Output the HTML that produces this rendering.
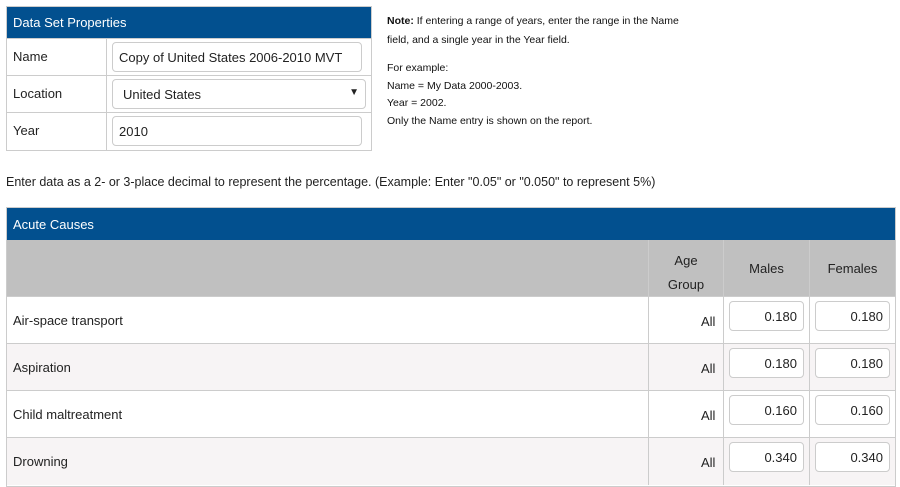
<!DOCTYPE html>
<html><head><style>
*{box-sizing:border-box;margin:0;padding:0}
body{width:900px;height:483px;overflow:hidden;background:#fff;font-family:"Liberation Sans",sans-serif;color:#222;position:relative}
.a{position:absolute}
.blue{background:#02508f;color:#fff;font-size:13px;}
.inp{position:absolute;background:#fff;border:1px solid #ccc;border-radius:4px;font-size:13px;color:#222}
.cell{position:absolute;border:1px solid #ccc}
.lbl{position:absolute;font-size:13px}
.note{position:absolute;left:387px;font-size:10.5px;color:#111;white-space:nowrap}
</style></head><body>
<div class="a" style="left:6px;top:6px;width:366px;height:145px;border:1px solid #ccc"></div>
<div class="a blue" style="left:7px;top:7px;width:364px;height:31px;padding:8px 6px">Data Set Properties</div>
<div class="cell" style="left:6px;top:38px;width:101px;height:38px"></div>
<div class="cell" style="left:106px;top:38px;width:266px;height:38px"></div>
<div class="cell" style="left:6px;top:75px;width:101px;height:38px"></div>
<div class="cell" style="left:106px;top:75px;width:266px;height:38px"></div>
<div class="cell" style="left:6px;top:112px;width:101px;height:39px"></div>
<div class="cell" style="left:106px;top:112px;width:266px;height:39px"></div>
<div class="lbl" style="left:13px;top:49px">Name</div>
<div class="lbl" style="left:13px;top:86px">Location</div>
<div class="lbl" style="left:13px;top:123px">Year</div>
<div class="inp" style="left:112px;top:42px;width:250px;height:30px;padding:7px 6px;white-space:nowrap;overflow:hidden">Copy of United States 2006-2010 MVT</div>
<div class="inp" style="left:112px;top:79px;width:254px;height:30px;padding:7px 10px">United States<span style="position:absolute;right:6px;top:7px;font-size:10px">▼</span></div>
<div class="inp" style="left:112px;top:116px;width:250px;height:30px;padding:7px 6px">2010</div>
<div class="note" style="top:15px"><b>Note:</b> If entering a range of years, enter the range in the Name</div>
<div class="note" style="top:34px">field, and a single year in the Year field.</div>
<div class="note" style="top:62px">For example:</div>
<div class="note" style="top:80px">Name = My Data 2000-2003.</div>
<div class="note" style="top:97px">Year = 2002.</div>
<div class="note" style="top:115px">Only the Name entry is shown on the report.</div>
<div class="a" style="left:6px;top:175px;font-size:12.5px;white-space:nowrap">Enter data as a 2- or 3-place decimal to represent the percentage. (Example: Enter "0.05" or "0.050" to represent 5%)</div>
<div class="a" style="left:6px;top:207px;width:890px;height:280px;border:1px solid #ccc"></div>
<div class="a blue" style="left:7px;top:208px;width:888px;height:32px;padding:9px 6px">Acute Causes</div>
<div class="a" style="left:7px;top:240px;width:888px;height:57px;background:#c0c0c0"></div>
<div class="a" style="left:7px;top:344px;width:888px;height:47px;background:#f7f4f5"></div>
<div class="a" style="left:7px;top:438px;width:888px;height:47px;background:#f7f4f5"></div>
<div class="a" style="left:6px;top:343px;width:890px;height:1px;background:#ccc"></div>
<div class="a" style="left:6px;top:390px;width:890px;height:1px;background:#ccc"></div>
<div class="a" style="left:6px;top:437px;width:890px;height:1px;background:#ccc"></div>
<div class="a" style="left:6px;top:296px;width:890px;height:1px;background:#ccc"></div>
<div class="a" style="left:648px;top:240px;width:1px;height:245px;background:#ccc"></div>
<div class="a" style="left:723px;top:240px;width:1px;height:245px;background:#ccc"></div>
<div class="a" style="left:809px;top:240px;width:1px;height:245px;background:#ccc"></div>
<div class="lbl" style="left:649px;top:249px;width:74px;text-align:center;line-height:24px">Age<br>Group</div>
<div class="lbl" style="left:724px;top:261px;width:85px;text-align:center">Males</div>
<div class="lbl" style="left:810px;top:261px;width:85px;text-align:center">Females</div>
<div class="lbl" style="left:13px;top:313px">Air-space transport</div>
<div class="lbl" style="left:13px;top:360px">Aspiration</div>
<div class="lbl" style="left:13px;top:407px">Child maltreatment</div>
<div class="lbl" style="left:13px;top:454px">Drowning</div>
<div class="lbl" style="left:701px;top:314px">All</div>
<div class="lbl" style="left:701px;top:361px">All</div>
<div class="lbl" style="left:701px;top:408px">All</div>
<div class="lbl" style="left:701px;top:455px">All</div>
<div class="inp" style="left:729px;top:301px;width:75px;height:30px;padding:7px 6px;text-align:right">0.180</div>
<div class="inp" style="left:815px;top:301px;width:75px;height:30px;padding:7px 6px;text-align:right">0.180</div>
<div class="inp" style="left:729px;top:348px;width:75px;height:30px;padding:7px 6px;text-align:right">0.180</div>
<div class="inp" style="left:815px;top:348px;width:75px;height:30px;padding:7px 6px;text-align:right">0.180</div>
<div class="inp" style="left:729px;top:395px;width:75px;height:30px;padding:7px 6px;text-align:right">0.160</div>
<div class="inp" style="left:815px;top:395px;width:75px;height:30px;padding:7px 6px;text-align:right">0.160</div>
<div class="inp" style="left:729px;top:442px;width:75px;height:30px;padding:7px 6px;text-align:right">0.340</div>
<div class="inp" style="left:815px;top:442px;width:75px;height:30px;padding:7px 6px;text-align:right">0.340</div>
</body></html>
